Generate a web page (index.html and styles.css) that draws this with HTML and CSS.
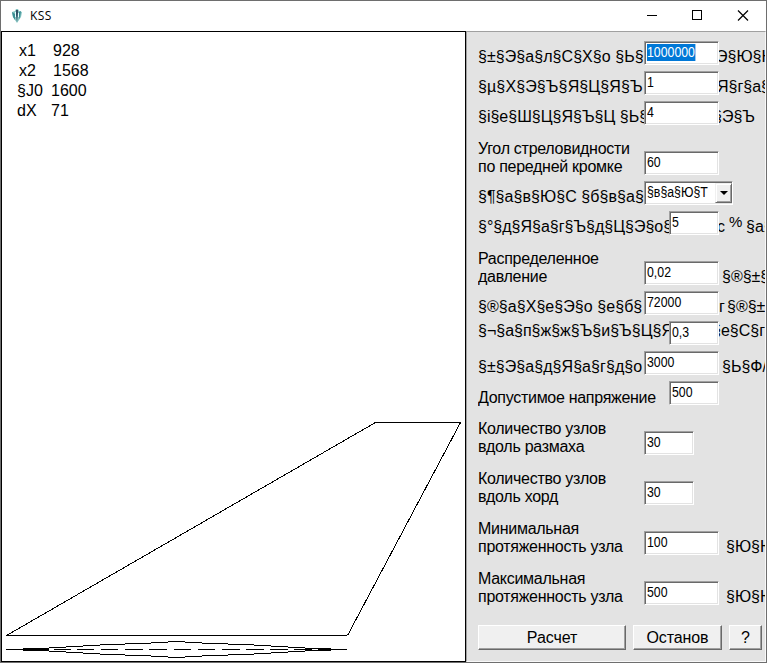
FILE: index.html
```
<!DOCTYPE html>
<html lang="ru">
<head>
<meta charset="utf-8">
<title>KSS</title>
<link rel="stylesheet" href="styles.css">
</head>
<body>
<div class="window">
  <header class="titlebar">
    <svg class="logo" width="12" height="15" viewBox="0 0 12 15"><path d="M5 0h2l1 2 3 1-1 5-4 6-4-6-1-5 3-1z" fill="#86c5c3"/><path d="M1 3l3 2v6L2 8zM8 3l2-1-1 6-1 2z" fill="#3b8f95"/><path d="M5 1h2v3l-1 9-1-7z" fill="#304f65"/><path d="M4 3h1v5H4zM7 4h1v4H7z" fill="#e5ffff"/></svg>
    <span class="caption">KSS</span>
    <svg class="controls" width="114" height="30" viewBox="0 0 114 30" fill="none" stroke="#000" shape-rendering="crispEdges"><path d="M0 14.500h10M45.500 9.500h9v9h-9z"/><path d="M91 9.500l10 10M101 9.500l-10 10" shape-rendering="auto" stroke-width="1.200"/></svg>
  </header>
  <main class="workspace">
    <section class="canvas">
      <dl class="stats">
        <div class="s1"><dt>x1</dt><dd>928</dd></div>
        <div class="s2"><dt>x2</dt><dd>1568</dd></div>
        <div class="s3"><dt>§J0</dt><dd>1600</dd></div>
        <div class="s4"><dt>dX</dt><dd>71</dd></div>
      </dl>
      <svg class="wing" width="463" height="245" viewBox="2 416 463 245" fill="none" stroke="#000" shape-rendering="crispEdges">
        <path d="M6.500 635.500L375.500 422.500H460.500L347.500 635.500M6 635.500H347"/>
        <path d="M6 649.500H49M54 649.500H71M77 649.500H94M101 649.500H118M125 649.500H143M149 649.500H167M174 649.500H191M198 649.500H215M222 649.500H240M246 649.500H264M270 649.500H288M294 649.500H312M318 649.500H347"/>
        <path d="M23 648.500H49M49 647.500H66M66 646.500H83M83 645.500H100M100 644.500H125M125 643.500H151M151 642.500H168M168 641.500H185M185 642.500H202M202 643.500H228M228 644.500H254M254 645.500H271M271 646.500H288M288 647.500H305M305 648.500H331"/>
        <path d="M23 650.500H49M49 651.500H66M66 652.500H83M83 653.500H100M100 654.500H125M125 655.500H151M151 656.500H168M168 657.500H185M185 656.500H202M202 655.500H228M228 654.500H254M254 653.500H271M271 652.500H288M288 651.500H305M305 650.500H331"/>
      </svg>
    </section>
    <section class="panel">
      <div class="row"><label class="wide">§±§Э§а§л§С§Х§о §Ь§</label><div class="field"><span class="selected">1000000</span></div><span class="unit u1">Э§Ю§Ю</span></div>
      <div class="row"><label class="wider">§µ§Х§Э§Ъ§Я§Ц§Я§Ъ</label><div class="field"><span>1</span></div><span class="unit u2">Я§г§а§</span></div>
      <div class="row"><label>§і§е§Ш§Ц§Я§Ъ§Ц §Ь§</label><div class="field"><span>4</span></div><span class="unit u3">§Э§Ъ</span></div>
      <div class="row tall"><label><b>Угол стреловидности</b><b>по передней кромке</b></label><div class="field"><span>60</span></div></div>
      <div class="row"><label class="wide">§¶§а§в§Ю§С §б§в§а§</label><div class="field combo"><span>§в§а§Ю§Т</span><i class="drop"></i></div></div>
      <div class="row late"><label>§°§д§Я§а§г§Ъ§д§Ц§Э§о§</label><div class="field small"><span>5</span></div><span class="unit u6">с</span><span class="percent">%</span><span class="unit">§а§</span></div>
      <div class="row tall"><label><b>Распределенное</b><b>давление</b></label><div class="field"><span>0,02</span></div><span class="unit gap">§®§±§</span></div>
      <div class="row"><label class="wide">§®§а§Х§е§Э§о §е§б§</label><div class="field"><span>72000</span></div><span class="unit u8">г</span><span class="unit">§®§±§</span></div>
      <div class="row late raised"><label>§¬§а§п§ж§ж§Ъ§и§Ъ§Ц§Я</label><div class="field small"><span>0,3</span></div><span class="unit u9">§е§С§г</span></div>
      <div class="row"><label class="wide">§±§Э§а§д§Я§а§г§д§о</label><div class="field"><span>3000</span></div><span class="unit gap">§Ь§Ф/</span></div>
      <div class="row late stress"><label>Допустимое напряжение</label><div class="field small"><span>500</span></div></div>
      <div class="row tall"><label><b>Количество узлов</b><b>вдоль размаха</b></label><div class="field small"><span>30</span></div></div>
      <div class="row tall"><label><b>Количество узлов</b><b>вдоль хорд</b></label><div class="field small"><span>30</span></div></div>
      <div class="row tall"><label><b>Минимальная</b><b>протяженность узла</b></label><div class="field"><span>100</span></div><span class="unit far">§Ю§Ю</span></div>
      <div class="row tall"><label><b>Максимальная</b><b>протяженность узла</b></label><div class="field"><span>500</span></div><span class="unit far">§Ю§Ю</span></div>
      <div class="actions"><button class="calc">Расчет</button><button class="stop">Останов</button><button class="help">?</button></div>
    </section>
  </main>
</div>
</body>
</html>
```
FILE: styles.css
```
* { box-sizing: border-box; }
body { margin: 0; font: 16px/18px "Liberation Sans", Arial, sans-serif; color: #000; }
.window { width: 767px; height: 663px; border: 1px solid #6e6e6e; background: #fff; overflow: hidden; display: flex; flex-direction: column; }
.titlebar { height: 30px; flex: none; display: flex; align-items: center; padding-left: 10px; }
.caption { font: 12px/16px "Open Sans", sans-serif; margin-left: 7px; flex: 1; letter-spacing: .4px; }
.controls { margin-right: 5px; }
.workspace { flex: 1; min-height: 0; display: flex; }
.canvas { width: 465px; flex: none; border: 1px solid #000; display: flex; flex-direction: column; justify-content: space-between; }
.stats { margin: 9px 0 0 17px; line-height: 20px; }
.stats div { display: flex; }
.stats dt { width: 34px; }
.stats dd { margin: 0; }
.s3, .s4 { margin-left: -2px; }
.wing { flex: none; display: block; }
.panel { flex: 1; min-width: 0; background: #e3e3e3; border: 1px solid #f8f8f8; border-top-color: #a0a0a0; border-left-color: #a0a0a0; padding: 9px 0 0 11px; overflow: hidden; }
.row { height: 30px; display: flex; }
.row label { width: 166px; flex: none; padding-top: 7px; overflow: hidden; white-space: nowrap; }
.row label.wide { letter-spacing: .06px; }
.row label.wider { letter-spacing: .12px; }
.row.late label { width: 191px; }
.row.raised label { padding-top: 1px; }
.row.stress label { padding-top: 8px; letter-spacing: -.29px; }
.row.tall { height: 50px; }
.row.tall label { padding-top: 9px; letter-spacing: -.28px; }
.row.tall .field { margin-top: 20px; }
.row.tall .unit { padding-top: 27px; }
label b { display: block; font-weight: normal; }
.field { width: 75px; height: 24px; flex: none; background: #fff; border: 1px solid; border-color: #a0a0a0 #fff #fff #a0a0a0; box-shadow: inset 1px 1px #696969, inset -1px -1px #e3e3e3; padding: 2px 0 0 2px; font-size: 14px; line-height: 17px; white-space: nowrap; }
.field span { display: inline-block; transform: scaleX(.88); transform-origin: left; }
.field.small { width: 50px; }
.selected { background: #0078d7; color: #fff; }
.combo { width: 89px; display: flex; }
.combo span { width: 68px; flex: none; }
.drop { position: relative; width: 17px; height: 20px; flex: none; margin: -1px 1px 0 auto; background: #f0f0f0; border: 1px solid; border-color: #f0f0f0 #696969 #696969 #f0f0f0; box-shadow: inset 1px 1px #fff, inset -1px -1px #a0a0a0; }
.drop::after { content: ""; position: absolute; left: 4px; top: 7px; border: 4px solid transparent; border-top-color: #000; border-bottom: 0; }
.unit { flex: none; padding-top: 7px; overflow: hidden; white-space: nowrap; }
.u1 { text-indent: -3px; }
.u2 { text-indent: -2px; }
.u3 { text-indent: -6px; }
.u6 { text-indent: -2px; width: 7px; }
.percent { width: 20px; flex: none; padding: 2px 0 0 3px; font-size: 15px; }
.gap { margin-left: 3px; }
.far { margin-left: 7px; }
.u8 { width: 8px; }
.u9 { padding-top: 1px; text-indent: -7px; }
.actions { display: flex; gap: 7px; margin-top: 14px; }
.actions button { height: 25px; padding: 0; font: inherit; letter-spacing: -.1px; background: #f0f0f0; border: 1px solid; border-color: #fff #696969 #696969 #fff; box-shadow: inset -1px -1px #a0a0a0; }
.calc { width: 148px; }
.stop { width: 89px; }
.help { width: 33px; }
```
